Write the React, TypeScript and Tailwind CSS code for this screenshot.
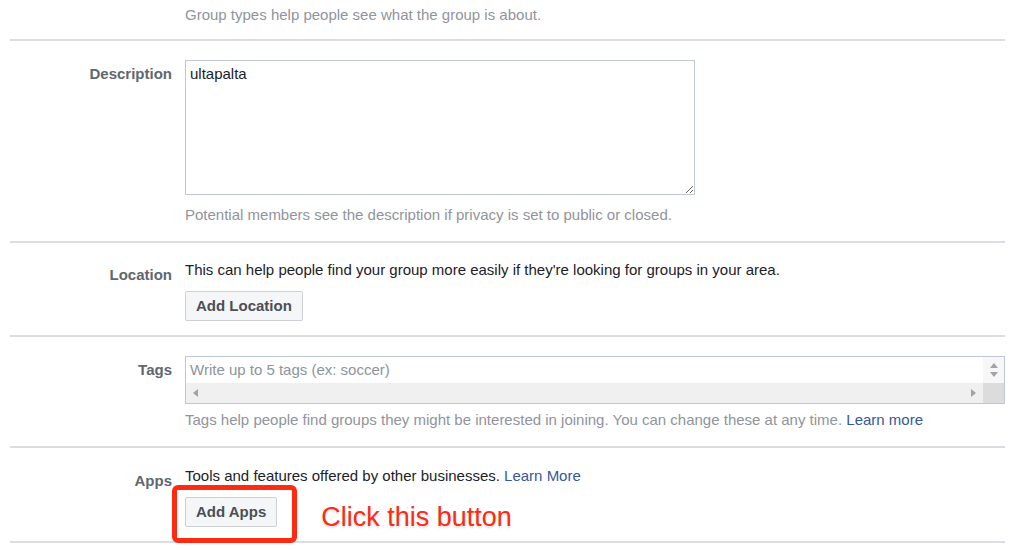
import type { ReactNode } from "react";

const FONT = "font-['Liberation_Sans',Arial,sans-serif]";

function Fila({ label, children, className = "" }: { label: string; children: ReactNode; className?: string }) {
  return (
    <section className={`flex border-t-2 border-[#dadde1] ${className}`}>
      <div className="w-[162px] shrink-0 pt-[5px] text-right text-[15px] leading-[18px] font-bold text-[#606770]">{label}</div>
      <div className="ml-[13px] flex-1">{children}</div>
    </section>
  );
}

function Boton({ children }: { children: ReactNode }) {
  return (
    <button className="h-[30px] rounded-[2px] border border-[#ccd0d5] bg-[#f5f6f7] px-[10px] text-[15px] leading-[18px] font-bold text-[#4b4f56]">
      {children}
    </button>
  );
}

function Triangulo({ dir }: { dir: "up" | "down" | "left" | "right" }) {
  const puntos = {
    up: "0,5 4,0 8,5",
    down: "0,0 8,0 4,5",
    left: "5,0 5,8 0,4",
    right: "0,0 0,8 5,4",
  }[dir];
  const horizontal = dir === "left" || dir === "right";
  return (
    <svg width={horizontal ? 5 : 8} height={horizontal ? 8 : 5} viewBox={horizontal ? "0 0 5 8" : "0 0 8 5"}>
      <polygon points={puntos} fill="#a3a3a3" />
    </svg>
  );
}

export default function App() {
  return (
    <div className={`min-h-[550px] w-[1012px] overflow-hidden bg-white ${FONT}`}>
      <div className="ml-[10px] w-[995px]">
        <div className="pt-[6px] pb-[15px] pl-[175px] text-[15px] leading-[18px] text-[#90949c]">
          Group types help people see what the group is about.
        </div>

        <Fila label="Description" className="pt-[19px] pb-[17px]">
          <textarea
            defaultValue="ultapalta"
            className="block h-[135px] w-[510px] border border-[#bdc7d8] px-[4px] pt-[4px] text-[15px] leading-[18px] text-[#1d2129] outline-none"
          />
          <p className="mt-[11px] text-[15px] leading-[18px] text-[#90949c]">
            Potential members see the description if privacy is set to public or closed.
          </p>
        </Fila>

        <Fila label="Location" className="pt-[18px] pb-[14px]">
          <p className="text-[15px] leading-[18px] text-[#1d2129]">
            This can help people find your group more easily if they're looking for groups in your area.
          </p>
          <div className="mt-[12px]">
            <Boton>Add Location</Boton>
          </div>
        </Fila>

        <Fila label="Tags" className="pt-[19px] pb-[17px]">
          <div className="flex h-[48px] w-[820px] border border-[#bdc7d8]">
            <div className="flex flex-1 flex-col">
              <div className="flex h-[26px] items-center pl-[4px] text-[15px] text-[#8d949e]">Write up to 5 tags (ex: soccer)</div>
              <div className="flex h-[20px] items-center justify-between bg-[#f0f0f0] px-[7px]">
                <Triangulo dir="left" />
                <Triangulo dir="right" />
              </div>
            </div>
            <div className="flex w-[21px] flex-col">
              <div className="flex h-[26px] flex-col items-center justify-center gap-[4px] bg-[#f7f7f7]">
                <Triangulo dir="up" />
                <Triangulo dir="down" />
              </div>
              <div className="h-[20px] bg-[#dcdcdc]" />
            </div>
          </div>
          <p className="mt-[7px] text-[15px] leading-[18px] text-[#90949c]">
            Tags help people find groups they might be interested in joining. You can change these at any time.{" "}
            <span className="text-[#365899]">Learn more</span>
          </p>
        </Fila>

        <Fila label="Apps" className="pt-[19px] pb-[14px]">
          <p className="text-[15px] leading-[18px] text-[#1d2129]">
            Tools and features offered by other businesses. <span className="text-[#365899]">Learn More</span>
          </p>
          <div className="mt-[12px] flex h-[30px] items-start">
            <div className="relative">
              <Boton>Add Apps</Boton>
              <div className="pointer-events-none absolute -top-[12px] -right-[20px] -bottom-[16px] -left-[13px] rounded-[6px] border-[5px] border-[#ff2a12]" />
            </div>
            <span className="mt-[5px] ml-[44px] text-[27px] leading-[30px] whitespace-nowrap text-[#ff2a12] [text-shadow:0_2px_2px_rgba(0,0,0,0.12)]">
              Click this button
            </span>
          </div>
        </Fila>

        <div className="border-t-2 border-[#dadde1]" />
      </div>
    </div>
  );
}
